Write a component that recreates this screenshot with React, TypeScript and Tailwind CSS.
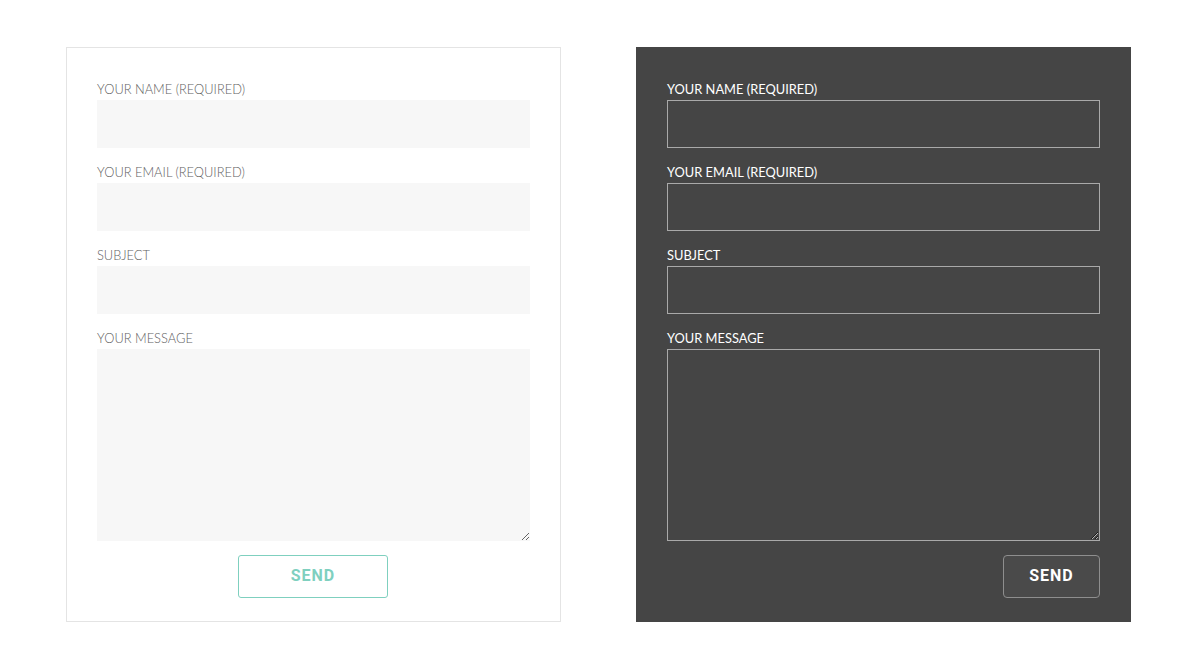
import React from "react";

type Theme = "light" | "dark";

const fields = [
  { label: "YOUR NAME (REQUIRED)", type: "text" },
  { label: "YOUR EMAIL (REQUIRED)", type: "email" },
  { label: "SUBJECT", type: "text" },
];

function ContactForm({ theme }: { theme: Theme }) {
  const light = theme === "light";
  const card = light
    ? "bg-white border border-[#e4e4e4]"
    : "bg-[#454545] border border-[#454545]";
  const label = light
    ? "text-[#626262] font-light"
    : "text-white font-normal";
  const input = light
    ? "bg-[#f7f7f7] border-0"
    : "bg-transparent border border-[#a9a9a9]";

  return (
    <form
      className={`w-[495px] shrink-0 flex flex-col px-[30px] pt-[30px] pb-[23px] ${card}`}
      style={{ fontFamily: "Lato, 'Open Sans', sans-serif" }}
      onSubmit={(e) => e.preventDefault()}
    >
      {fields.map((f) => (
        <label key={f.label} className="flex flex-col mb-[13px]">
          <span className={`text-[12.85px] leading-[20px] pt-[1px] mb-[1px] ${label}`}>
            {f.label}
          </span>
          <input type={f.type} className={`h-12 w-full outline-none ${input}`} />
        </label>
      ))}
      <label className="flex flex-col">
        <span className={`text-[12.85px] leading-[20px] pt-[1px] mb-[1px] ${label}`}>
          YOUR MESSAGE
        </span>
        <textarea className={`h-[192px] w-full outline-none resize-y block ${input}`} />
      </label>
      <div className={`flex mt-[14px] ${light ? "justify-center pr-[1px]" : "justify-end"}`}>
        {light ? (
          <button
            type="submit"
            className="w-[150px] h-[43px] pb-[2px] rounded-[3px] border border-[#7fd0bf] bg-white text-[#7fd0bf] text-[16px] font-bold tracking-[1px]"
            style={{ fontFamily: "Roboto, sans-serif" }}
          >
            SEND
          </button>
        ) : (
          <button
            type="submit"
            className="w-[97px] h-[43px] pb-[2px] rounded-[4px] border border-[#8e8e8e] bg-[#4a4a4a] text-white text-[16px] font-bold tracking-[1px]"
            style={{ fontFamily: "Roboto, sans-serif" }}
          >
            SEND
          </button>
        )}
      </div>
    </form>
  );
}

export default function App() {
  return (
    <div className="w-[1191px] h-[669px] bg-white flex items-start gap-[75px] pl-[66px] pt-[47px]">
      <ContactForm theme="light" />
      <ContactForm theme="dark" />
    </div>
  );
}
